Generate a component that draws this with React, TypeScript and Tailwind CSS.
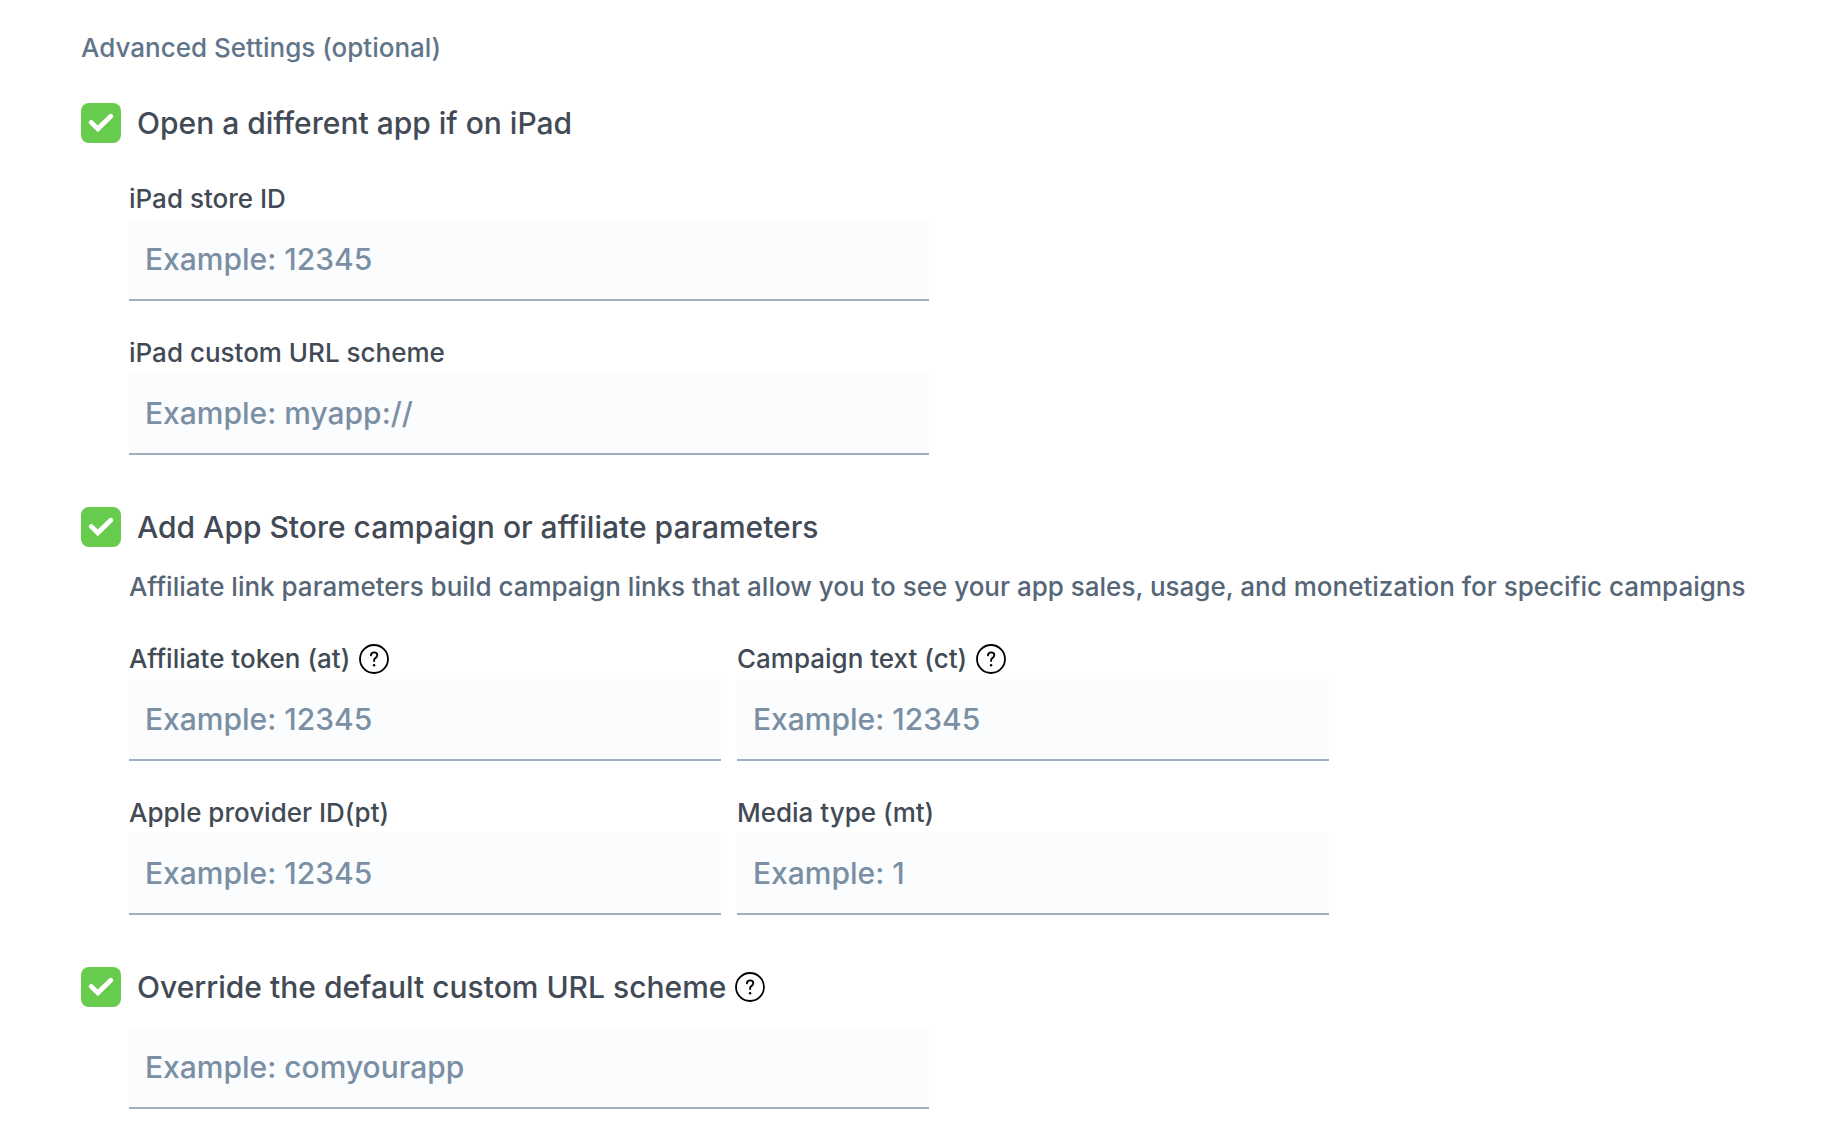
import React from "react";

function Help({ label }: { label: string }) {
  return (
    <button type="button" aria-label={label} className="ml-2 shrink-0">
      <svg width="32" height="32" viewBox="0 0 32 32" fill="none" className="block">
        <circle cx="16" cy="16" r="14" stroke="#000" strokeWidth="1.8" />
        <path d="M12.9 12.4c.2-1.9 1.4-3 3.2-3s3.2 1.1 3.2 2.8c0 1.3-.7 2-1.7 2.7-1.1.8-1.5 1.3-1.5 2.3v.9" stroke="#000" strokeWidth="1.9" strokeLinecap="round" strokeLinejoin="round" />
        <circle cx="16.1" cy="22.2" r="1.2" fill="#000" />
      </svg>
    </button>
  );
}

function Check({ id, label, help }: { id: string; label: string; help?: boolean }) {
  return (
    <div className="flex h-10 items-center">
      <span className="relative block size-10">
        <input id={id} type="checkbox" defaultChecked className="peer block size-10 appearance-none rounded-lg border border-[#8899ab] bg-white checked:border-0 checked:bg-[#67cb4d]" />
        <svg viewBox="0 0 40 40" fill="none" className="pointer-events-none absolute inset-0 hidden size-10 peer-checked:block">
          <path d="M10.2 19.4l6.6 6.4L29.8 13.2" stroke="white" strokeWidth="4.8" strokeLinecap="round" />
        </svg>
      </span>
      <label htmlFor={id} className="ml-4 text-[30px] leading-10 text-[#414a55]">{label}</label>
      {help && <Help label={"About: " + label} />}
    </div>
  );
}

const inputClass =
  "block h-[82px] w-full border-b-2 border-[#a0b0c0] bg-[#fafcfe] px-4 text-[30px] text-[#414a55] outline-none placeholder:text-[#7a8fa3] placeholder:opacity-100";

function Field({ id, label, placeholder, help }: { id: string; label: string; placeholder: string; help?: boolean }) {
  return (
    <div>
      <div className="flex h-10 items-center">
        <label htmlFor={id} className="text-[26px] leading-10 text-[#414a55]">{label}</label>
        {help && <Help label={"About: " + label} />}
      </div>
      <input id={id} type="text" placeholder={placeholder} className={inputClass} />
    </div>
  );
}

export default function App() {
  return (
    <main className="bg-white px-[81px] pt-7 pb-8 font-[Inter,sans-serif] font-medium">
      <h2 className="text-[26px] leading-10 text-[#61758a]">Advanced Settings (optional)</h2>
      <section className="mt-[35px]">
        <Check id="ipad" label="Open a different app if on iPad" />
        <div className="mt-9 ml-12 grid max-w-[800px] gap-8">
          <Field id="store" label="iPad store ID" placeholder="Example: 12345" />
          <Field id="scheme" label="iPad custom URL scheme" placeholder="Example: myapp://" />
        </div>
      </section>
      <section className="mt-[52px]">
        <Check id="affiliate" label="Add App Store campaign or affiliate parameters" />
        <p className="mt-5 ml-12 text-[26px] leading-10 whitespace-nowrap text-[#566677]">
          Affiliate link parameters build campaign links that allow you to see your app sales, usage, and monetization for specific campaigns
        </p>
        <div className="mt-8 ml-12 grid max-w-[1200px] grid-cols-2 gap-x-4 gap-y-8">
          <Field id="at" label="Affiliate token (at)" placeholder="Example: 12345" help />
          <Field id="ct" label="Campaign text (ct)" placeholder="Example: 12345" help />
          <Field id="pt" label="Apple provider ID(pt)" placeholder="Example: 12345" />
          <Field id="mt" label="Media type (mt)" placeholder="Example: 1" />
        </div>
      </section>
      <section className="mt-[52px]">
        <Check id="override" label="Override the default custom URL scheme" help />
        <div className="mt-5 ml-12 max-w-[800px]">
          <input aria-label="Default custom URL scheme" type="text" placeholder="Example: comyourapp" className={inputClass} />
        </div>
      </section>
    </main>
  );
}
